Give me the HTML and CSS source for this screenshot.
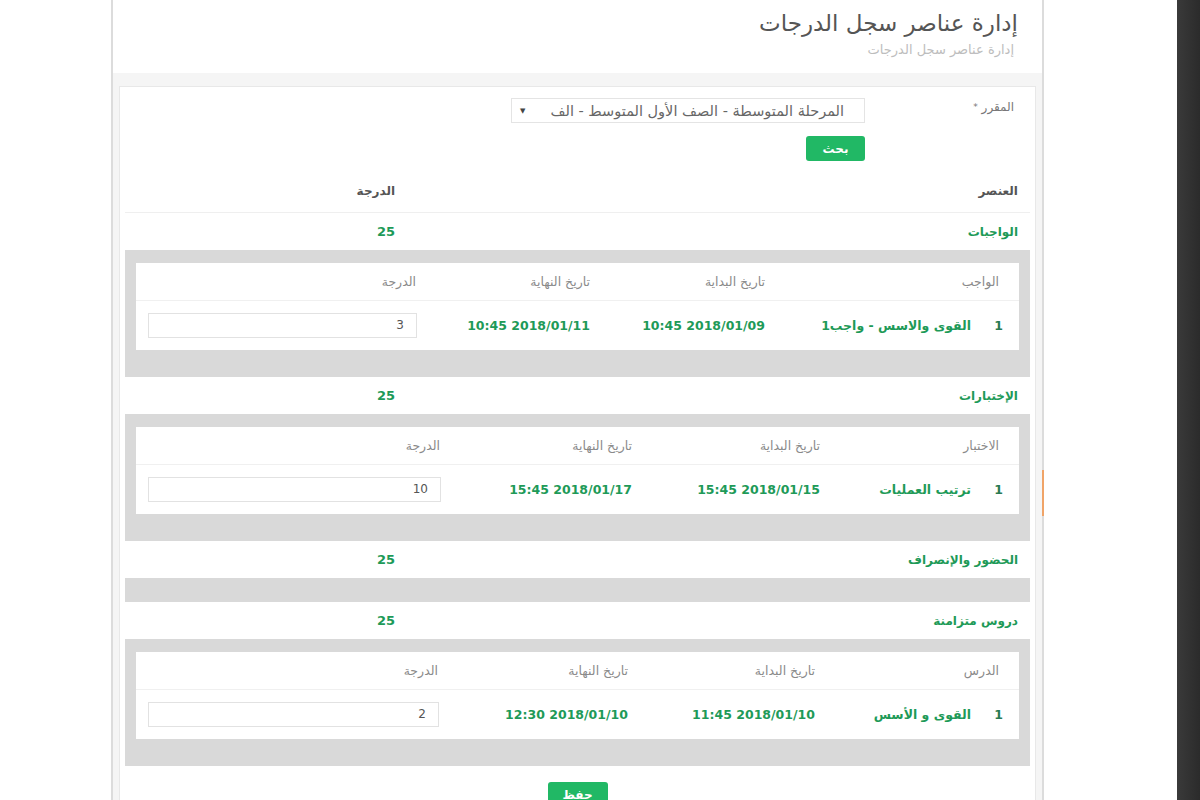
FILE: index.html
```html
<!DOCTYPE html>
<html lang="ar">
<head>
<meta charset="utf-8">
<title>إدارة عناصر سجل الدرجات</title>
<link rel="stylesheet" href="styles.css">
</head>
<body>
<div class="screen">
  <div class="left-gap"></div>
  <div class="frame" dir="rtl">
    <header class="page-head">
      <h1 class="page-title">إدارة عناصر سجل الدرجات</h1>
      <p class="breadcrumb">إدارة عناصر سجل الدرجات</p>
    </header>
    <div class="page-body">
      <section class="panel">
        <div class="form-row">
          <label class="form-label">المقرر <span class="req">*</span></label>
          <div class="select">
            <span class="select-text">المرحلة المتوسطة - الصف الأول المتوسط - الف</span>
            <span class="select-arrow">▼</span>
          </div>
        </div>
        <div class="btn-row">
          <button class="btn" type="button">بحث</button>
        </div>

        <div class="items-head">
          <div class="c-item">العنصر</div>
          <div class="c-grade">الدرجة</div>
        </div>

        <div class="item-row">
          <div class="c-item">الواجبات</div>
          <div class="c-grade">25</div>
        </div>
        <div class="gray-box">
          <table class="inner t-hw">
            <colgroup><col class="k-num"><col class="k-name"><col class="k-start"><col class="k-end"><col class="k-grade"></colgroup>
            <thead>
              <tr><th colspan="2" class="th-first">الواجب</th><th>تاريخ البداية</th><th>تاريخ النهاية</th><th>الدرجة</th></tr>
            </thead>
            <tbody>
              <tr><td class="num">1</td><td>القوى والاسس - واجب1</td><td>2018/01/09 10:45</td><td>2018/01/11 10:45</td><td class="grade"><input class="grade-input" type="text" value="3"></td></tr>
            </tbody>
          </table>
        </div>

        <div class="item-row">
          <div class="c-item">الإختبارات</div>
          <div class="c-grade">25</div>
        </div>
        <div class="gray-box">
          <table class="inner t-ex">
            <colgroup><col class="k-num"><col class="k-name"><col class="k-start"><col class="k-end"><col class="k-grade"></colgroup>
            <thead>
              <tr><th colspan="2" class="th-first">الاختبار</th><th>تاريخ البداية</th><th>تاريخ النهاية</th><th>الدرجة</th></tr>
            </thead>
            <tbody>
              <tr><td class="num">1</td><td>ترتيب العمليات</td><td>2018/01/15 15:45</td><td>2018/01/17 15:45</td><td class="grade"><input class="grade-input" type="text" value="10"></td></tr>
            </tbody>
          </table>
        </div>

        <div class="item-row">
          <div class="c-item">الحضور والإنصراف</div>
          <div class="c-grade">25</div>
        </div>
        <div class="gray-box empty"></div>

        <div class="item-row">
          <div class="c-item">دروس متزامنة</div>
          <div class="c-grade">25</div>
        </div>
        <div class="gray-box">
          <table class="inner t-ls">
            <colgroup><col class="k-num"><col class="k-name"><col class="k-start"><col class="k-end"><col class="k-grade"></colgroup>
            <thead>
              <tr><th colspan="2" class="th-first">الدرس</th><th>تاريخ البداية</th><th>تاريخ النهاية</th><th>الدرجة</th></tr>
            </thead>
            <tbody>
              <tr><td class="num">1</td><td>القوى و الأسس</td><td>2018/01/10 11:45</td><td>2018/01/10 12:30</td><td class="grade"><input class="grade-input" type="text" value="2"></td></tr>
            </tbody>
          </table>
        </div>

        <div class="save-row">
          <button class="btn" type="button">حفظ</button>
        </div>
      </section>
    </div>
    <span class="scroll-thumb"></span>
  </div>
  <div class="right-gap"></div>
  <div class="dark-strip"></div>
</div>
</body>
</html>
```

FILE: styles.css
```css
* { box-sizing: border-box; }

html, body {
  margin: 0;
  padding: 0;
  background: #ffffff;
}

body {
  font-family: "DejaVu Sans", "Noto Sans", sans-serif;
  color: #555555;
  overflow: hidden;
}

.screen {
  display: flex;
  height: 800px;
  overflow: hidden;
}

.left-gap { width: 111px; flex: none; }
.right-gap { flex: 1; }

.dark-strip {
  width: 23px;
  flex: none;
  background: linear-gradient(to right, #3a3a3a, #2b2b2b);
}

.frame {
  position: relative;
  width: 933px;
  flex: none;
  border-left: 2px solid #dcdcdc;
  border-right: 2px solid #dcdcdc;
  background: #f5f5f5;
  display: flex;
  flex-direction: column;
}

.scroll-thumb {
  position: absolute;
  right: -2px;
  top: 470px;
  width: 2px;
  height: 46px;
  background: #f0a468;
}

/* header */
.page-head {
  flex: none;
  height: 73px;
  background: #ffffff;
  padding: 8px 24px 0 0;
}

.page-title {
  margin: 0;
  font-size: 23px;
  font-weight: normal;
  line-height: 30px;
  color: #555555;
}

.breadcrumb {
  margin: 5px 4px 0 0;
  font-size: 13px;
  line-height: 14px;
  color: #bdbdbd;
}

/* body */
.page-body {
  flex: 1;
  padding: 13px 6px 0 6px;
}

.panel {
  background: #ffffff;
  border: 1px solid #e8e8e8;
  border-bottom: none;
  min-height: 100%;
  padding: 11px 5px 0 5px;
}

.form-row {
  display: grid;
  grid-template-columns: 165px 354px;
  align-items: start;
}

.form-label {
  padding: 1px 16px 0 0;
  font-size: 12px;
  line-height: 16px;
  color: #777777;
}

.req { font-size: 9px; vertical-align: top; }

.select {
  height: 25px;
  border: 1px solid #e4e4e4;
  display: flex;
  align-items: center;
  justify-content: space-between;
  padding: 0 20px 0 8px;
}

.select-text {
  white-space: nowrap;
  font-size: 14.5px;
  color: #666666;
}

.select-arrow {
  font-size: 7px;
  color: #444444;
  flex: none;
}

.btn-row {
  padding: 13px 165px 0 0;
  display: flex;
}

.btn {
  width: 59px;
  height: 25px;
  border: none;
  border-radius: 3px;
  background: #21b865;
  color: #ffffff;
  font-family: "DejaVu Sans", sans-serif;
  font-size: 12px;
  font-weight: bold;
  padding: 0;
}

/* items */
.items-head,
.item-row {
  display: grid;
  grid-template-columns: 627px 1fr;
}

.items-head {
  padding: 22px 0 12px 0;
  border-bottom: 1px solid #efefef;
  font-size: 12px;
  font-weight: bold;
  line-height: 17px;
  color: #555555;
}

.item-row {
  height: 37px;
  align-items: center;
  font-size: 12px;
  font-weight: bold;
  color: #1e9a58;
}

.c-item { padding-right: 12px; }
.c-grade { padding-right: 8px; }
.item-row .c-grade { font-size: 13px; }

.gray-box {
  background: #d9d9d9;
  padding: 13px 11px 27px 11px;
}

.gray-box.empty {
  height: 24px;
  padding: 0;
}

.inner {
  width: 100%;
  border-collapse: collapse;
  table-layout: fixed;
  background: #ffffff;
}

.inner th {
  height: 37px;
  padding: 0 8px;
  text-align: right;
  font-size: 12.5px;
  font-weight: normal;
  color: #8a8a8a;
  border-bottom: 1px solid #f0f0f0;
}

.inner th.th-first { padding-right: 20px; }

.inner td {
  height: 50px;
  padding: 0 8px;
  text-align: right;
  font-size: 12.5px;
  font-weight: bold;
  color: #1e9a58;
  white-space: nowrap;
}

.inner td.num { padding-right: 16px; color: #2a7a52; }

.inner td.grade { padding: 0 7px 0 12px; }

.grade-input {
  width: 100%;
  height: 25px;
  border: 1px solid #e2e2e2;
  padding: 0 12px;
  text-align: right;
  font-family: "DejaVu Sans", sans-serif;
  font-size: 12px;
  color: #555555;
  background: #ffffff;
}

.k-num { width: 40px; }

.t-hw .k-name { width: 206px; }
.t-hw .k-start { width: 175px; }
.t-hw .k-end { width: 174px; }

.t-ex .k-name { width: 151px; }
.t-ex .k-start { width: 188px; }
.t-ex .k-end { width: 192px; }

.t-ls .k-name { width: 156px; }
.t-ls .k-start { width: 187px; }
.t-ls .k-end { width: 190px; }

.save-row {
  display: flex;
  justify-content: center;
  padding-top: 16px;
}

.save-row .btn { width: 60px; }
```
